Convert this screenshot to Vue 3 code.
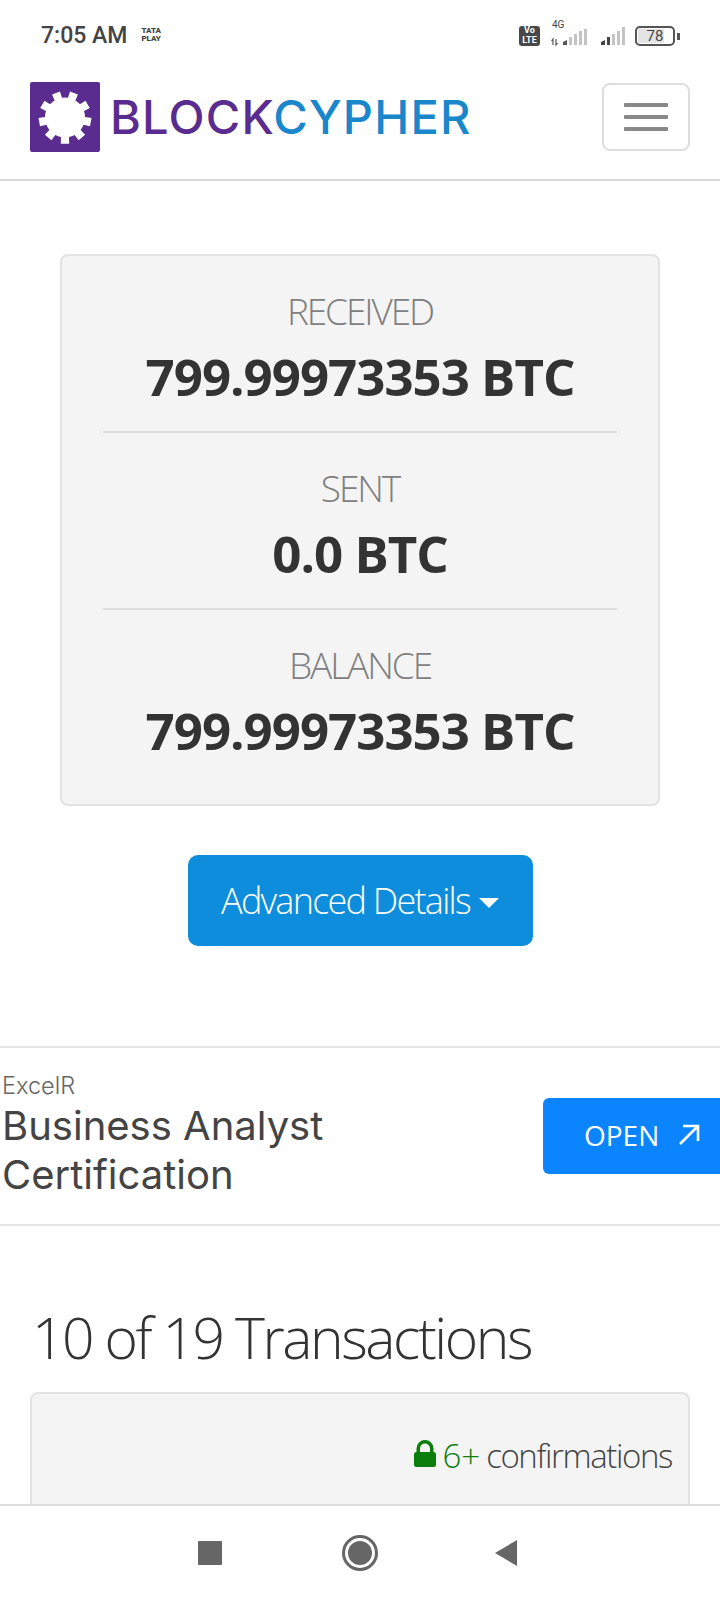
<template>
  <div class="screen">
    <div class="status-bar">
      <span class="clock">7:05 AM</span>
      <span class="carrier">TATA<br>PLAY</span>
      <div class="status-icons">
        <span class="volte">Vo<br>LTE</span>
        <div class="net">
          <span class="net-label">4G</span>
          <svg width="40" height="18" viewBox="0 0 40 18">
            <path d="M2 17v-6l-1.500 2M5 11v6l1.500-2" fill="none" stroke="#555" stroke-width="1.200"/>
            <path d="M12 17v-3l4-2v5z" fill="#555"/>
            <g fill="#c4c4c4"><rect x="18" y="9" width="3" height="8"/><rect x="23" y="6" width="3" height="11"/><rect x="28" y="3" width="3" height="14"/><rect x="33" y="1" width="3" height="16"/></g>
          </svg>
        </div>
        <svg class="signal" width="28" height="20" viewBox="0 0 28 20">
          <path d="M1 19v-3l4-2v5z" fill="#444"/><rect x="7" y="11" width="3" height="8" fill="#444"/>
          <g fill="#c4c4c4"><rect x="12" y="8" width="3" height="11"/><rect x="17" y="5" width="3" height="14"/><rect x="22" y="1" width="3" height="18"/></g>
        </svg>
        <div class="battery">
          <div class="battery-body"><span class="battery-fill"></span><span class="battery-num">78</span></div>
          <span class="battery-tip"></span>
        </div>
      </div>
    </div>

    <header class="navbar">
      <div class="brand">
        <svg class="brand-mark" width="70" height="70" viewBox="0 0 70 70">
          <rect width="70" height="70" rx="2" fill="#5b2c8f"/>
          <path :d="gearPath" fill="#fff"/>
        </svg>
        <span class="brand-text"><span class="block">BLOCK</span><span class="cypher">CYPHER</span></span>
      </div>
      <button class="menu-btn"><span></span><span></span><span></span></button>
    </header>

    <main class="content">
      <section class="summary">
        <div v-for="(item, i) in totals" :key="item.label" class="stat" :class="{ ruled: i > 0 }">
          <div class="stat-label">{{ item.label }}</div>
          <div class="stat-value">{{ item.value }}</div>
        </div>
      </section>

      <div class="details-wrap">
        <button class="details-btn">Advanced Details <i class="caret"></i></button>
      </div>

      <aside class="ad">
        <div class="ad-text">
          <div class="ad-brand">ExcelR</div>
          <div class="ad-title">Business Analyst<br>Certification</div>
        </div>
        <button class="open-btn">
          OPEN
          <svg width="24" height="24" viewBox="0 0 24 24" fill="none" stroke="#fff" stroke-width="2.600"><path d="M3 21 21 3M6 3h15v15"/></svg>
        </button>
      </aside>

      <h2 class="tx-heading">10 of 19 Transactions</h2>
      <div class="tx-card">
        <div class="confirm">
          <svg class="lock" width="22" height="27" viewBox="0 0 22 27" fill="#0a7d0a">
            <path d="M2.500 14V8.500a8.500 8.500 0 0 1 17 0V14h-3.500V8.500a5 5 0 0 0-10 0V14z"/>
            <rect x="0" y="12" width="22" height="15" rx="2.500"/>
          </svg>
          <span class="confirm-count">6+</span>
          <span>confirmations</span>
        </div>
      </div>
    </main>

    <footer class="softkeys">
      <span class="key-square"></span>
      <span class="key-home"><i></i></span>
      <svg width="24" height="28" viewBox="0 0 24 28"><path d="M23 1v26L1 14z" fill="#666"/></svg>
    </footer>
  </div>
</template>

<script setup>
const totals = [
  { label: 'RECEIVED', value: '799.99973353 BTC' },
  { label: 'SENT', value: '0.0 BTC' },
  { label: 'BALANCE', value: '799.99973353 BTC' },
]

// gear outline for the logo: 9 teeth, one pointing straight down
const teeth = 9
const polar = (r, a) => `${(35 + r * Math.cos(a)).toFixed(1)} ${(35.5 + r * Math.sin(a)).toFixed(1)}`
const gearPath = Array.from({ length: teeth }, (_, i) => {
  const a = (i / teeth) * Math.PI * 2 + Math.PI / 2
  const next = a + (Math.PI * 2) / teeth
  return `L${polar(20, a - 0.2)}L${polar(26.5, a - 0.16)}L${polar(26.5, a + 0.16)}L${polar(20, a + 0.2)}A20 20 0 0 1 ${polar(20, next - 0.2)}`
}).join('').replace('L', 'M') + 'Z'
</script>

<style>
html, body { margin: 0; background: #fff; }
</style>

<style scoped>
.screen { width: 720px; height: 1600px; display: flex; flex-direction: column; overflow: hidden; background: #fff; font-family: "Open Sans", "Liberation Sans", sans-serif; color: #333; }

.status-bar { height: 70px; flex-shrink: 0; display: flex; align-items: center; padding: 0 42px 0 41px; box-sizing: border-box; font-family: Roboto, "Liberation Sans", sans-serif; }
.clock { font-size: 23px; font-weight: 500; color: #444; }
.carrier { margin-left: 14px; font-size: 8px; line-height: 8px; font-weight: 900; color: #444; }
.status-icons { margin-left: auto; margin-right: -2px; display: flex; align-items: flex-end; gap: 9px; padding-top: 2px; }
.volte { width: 21px; height: 20px; margin-right: 2px; border-radius: 3px; background: #484848; color: #fff; font-size: 9px; line-height: 9.500px; font-weight: 700; text-align: center; }
.net { position: relative; width: 40px; height: 20px; }
.net svg { display: block; position: absolute; left: 0; bottom: 0; }
.net-label { position: absolute; left: 1px; top: -7px; font-size: 10px; color: #444; }
.signal { margin-right: -2px; }
.battery { display: flex; align-items: center; gap: 2px; }
.battery-body { position: relative; width: 40px; height: 20px; box-sizing: border-box; border: 2px solid #555; border-radius: 5px; overflow: hidden; }
.battery-fill { position: absolute; left: 1px; top: 1px; bottom: 1px; width: 72%; background: #e4e4e4; }
.battery-num { position: relative; display: block; text-align: center; font-size: 15px; line-height: 16px; color: #444; }
.battery-tip { width: 3px; height: 7px; background: #555; }

.navbar { height: 111px; flex-shrink: 0; box-sizing: border-box; padding: 12px 30px 0; border-bottom: 2px solid #d8d8d8; display: flex; justify-content: space-between; align-items: flex-start; }
.brand { display: flex; align-items: center; gap: 10px; }
.brand-mark { display: block; }
.brand-text { font-family: Inter, "Open Sans", sans-serif; font-size: 47px; font-weight: 500; line-height: 70px; letter-spacing: 1.200px; }
.block { color: #5b2c8f; }
.cypher { color: #1a87cb; }
.menu-btn { width: 88px; height: 68px; margin-top: 1px; padding: 0; background: #fff; border: 2px solid #ddd; border-radius: 8px; display: flex; flex-direction: column; align-items: center; justify-content: center; gap: 8px; }
.menu-btn span { width: 44px; height: 4px; background: #888; border-radius: 1px; }

.content { flex: 1; min-height: 0; overflow: hidden; display: flex; flex-direction: column; }

.summary { margin: 73px 60px 0; background: #f4f4f4; border: 2px solid #e3e3e3; border-radius: 8px; padding: 19px 41px 0; box-sizing: border-box; height: 552px; flex-shrink: 0; }
.stat { text-align: center; height: 156px; }
.stat.ruled { border-top: 2px solid #ddd; padding-top: 19px; height: 177px; box-sizing: border-box; }
.stat-label { font-size: 37px; font-weight: 300; line-height: 72px; color: #808080; letter-spacing: -2.100px; }
.stat-value { font-size: 51px; font-weight: 700; line-height: 58px; color: #333; letter-spacing: -1px; }

.details-wrap { display: flex; justify-content: center; margin-top: 49px; }
.details-btn { width: 345px; height: 91px; background: #0d8ddb; color: #fff; border: none; border-radius: 10px; font-family: inherit; font-size: 36px; font-weight: 300; letter-spacing: -1.750px; display: flex; align-items: center; justify-content: center; gap: 9px; }
.caret { width: 0; height: 0; border-left: 10px solid transparent; border-right: 10px solid transparent; border-top: 10px solid #fff; margin-top: 4px; }

.ad { margin-top: 100px; height: 180px; flex-shrink: 0; box-sizing: border-box; border-top: 2px solid #e6e6e6; border-bottom: 2px solid #e6e6e6; display: flex; align-items: center; justify-content: space-between; font-family: Inter, Roboto, sans-serif; color: #444; }
.ad-text { padding: 0 0 3px 2px; }
.ad-brand { font-size: 23.500px; line-height: 30px; color: #666; font-weight: 300; }
.ad-title { font-size: 40px; line-height: 49px; font-weight: 400; }
.open-btn { width: 177px; height: 76px; padding: 0 0 3px 41px; background: #0a84ff; color: #fff; border: none; border-radius: 6px 0 0 6px; font-family: "Open Sans", sans-serif; font-size: 28px; font-weight: 400; display: flex; align-items: center; gap: 18px; }

.tx-heading { margin: 69px 0 0 32px; font-size: 57px; font-weight: 300; line-height: 84px; color: #333; letter-spacing: -2.450px; }
.tx-card { margin: 13px 30px 0; flex: 1; background: #f4f4f4; border: 2px solid #e3e3e3; border-bottom: none; border-radius: 8px 8px 0 0; padding: 44px 16px 0; }
.confirm { display: flex; justify-content: flex-end; align-items: center; gap: 6px; font-size: 33px; font-weight: 300; line-height: 36px; letter-spacing: -1.400px; color: #444; }
.lock { margin-top: -6px; }
.confirm-count { color: #0a7d0a; letter-spacing: 0; }

.softkeys { height: 96px; flex-shrink: 0; box-sizing: border-box; border-top: 2px solid #ddd; padding-right: 4px; display: flex; align-items: center; justify-content: center; gap: 118px; }
.key-square { width: 24px; height: 24px; background: #666; border-radius: 1px; }
.key-home { width: 36px; height: 36px; margin: 0 -2px 0 2px; box-sizing: border-box; border: 3px solid #666; border-radius: 50%; display: flex; align-items: center; justify-content: center; }
.key-home i { width: 24px; height: 24px; border-radius: 50%; background: #666; }
</style>
